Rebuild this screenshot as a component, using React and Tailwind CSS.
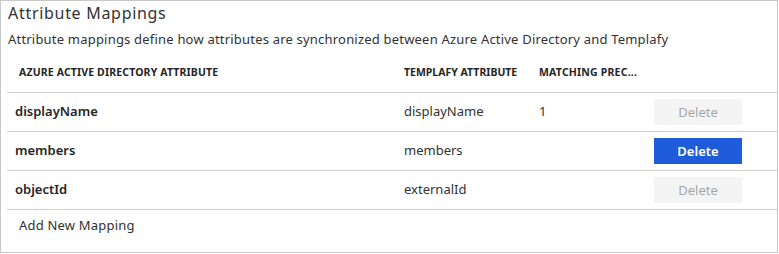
import { clsx } from 'clsx';

const rows = [
  { source: 'displayName', target: 'displayName', precedence: '1', active: false },
  { source: 'members', target: 'members', precedence: '', active: true },
  { source: 'objectId', target: 'externalId', precedence: '', active: false },
];

const cols = 'grid grid-cols-[389px_135px_115px_1fr]';

export default function App() {
  return (
    <div className="w-[779px] h-[254px] bg-white font-['Noto_Sans',sans-serif] text-[#252525]">
      <div className="w-[778px] h-[253px] border border-[#c8c8c8] flex flex-col">
        <h2 className="pl-[7px] pt-[3px] h-[26px] text-[16px] leading-[19px] tracking-[0.7px] text-[#323232]">
          Attribute Mappings
        </h2>
        <p className="pl-[7px] h-[26px] text-[13px] leading-[24px] tracking-[0.2px] text-[#323232]">
          Attribute mappings define how attributes are synchronized between Azure Active Directory and Templafy
        </p>

        <div className="ml-[6px]">
          <div className={clsx(cols, 'h-[39px] items-center text-[10.5px] font-bold text-[#252525]')}>
            <div className="pl-[12px] tracking-[0.15px]">AZURE ACTIVE DIRECTORY ATTRIBUTE</div>
            <div className="pl-[8px]">TEMPLAFY ATTRIBUTE</div>
            <div className="pl-[8px] tracking-[0.2px]">MATCHING PREC...</div>
            <div />
          </div>

          {rows.map((row) => (
            <div
              key={row.source}
              className={clsx(cols, 'h-[39px] items-center border-t border-[#cfcfcf] text-[13px]')}
            >
              <div className="pl-[8px] font-semibold text-[#252525]">{row.source}</div>
              <div className="pl-[8px] text-[#323232]">{row.target}</div>
              <div className="pl-[8px] text-[#323232]">{row.precedence}</div>
              <div className="pl-[8px]">
                <button
                  type="button"
                  className={clsx(
                    'w-[88px] h-[26px] text-[13px] leading-[26px]',
                    row.active
                      ? 'bg-[#1f5cd9] text-white font-semibold'
                      : 'bg-[#f4f4f4] text-[#a6a6a6]'
                  )}
                >
                  Delete
                </button>
              </div>
            </div>
          ))}

          <div className="border-t border-[#cfcfcf] h-[32px] flex items-center pl-[12px] text-[13px] tracking-[0.2px] text-[#323232]">
            Add New Mapping
          </div>
        </div>
      </div>
    </div>
  );
}
